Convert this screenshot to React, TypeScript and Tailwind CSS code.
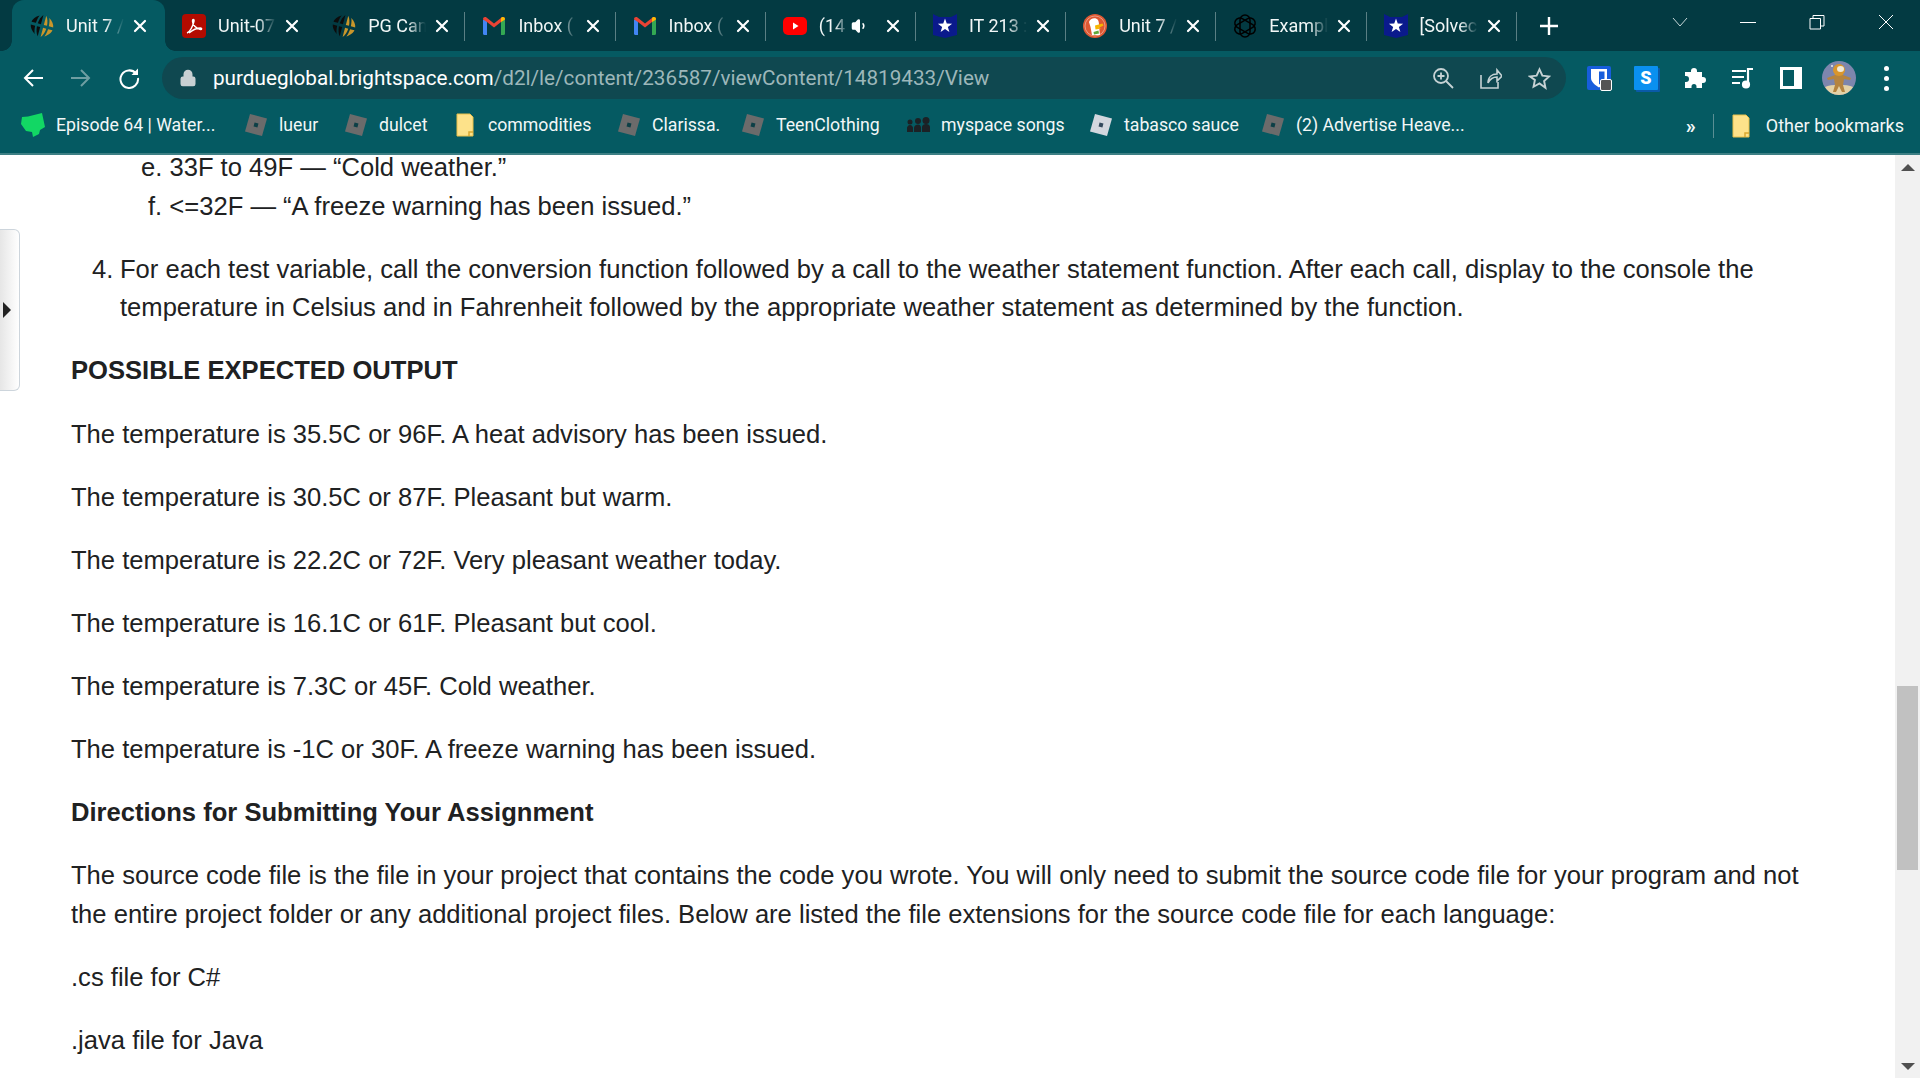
import type { ReactNode } from "react";
import { Lock, Volume1 } from "lucide-react";

function Globe() {
  return (
    <svg viewBox="0 0 24 24" className="w-6 h-6 shrink-0">
      <g transform="rotate(15 12 12)">
        <path d="M7 2.500C3.500 4.500 1 8 .8 10.500h4.500C5.500 7.500 6 4.500 7 2.500z" fill="#0c0c0c" />
        <path d="M10.500 1v9.500H7.200C7.400 7 8.500 3.500 10.500 1z" fill="#0c0c0c" />
        <path d="M13.500 1c2 2.500 3.100 6 3.300 9.500h-3.300z" fill="#c9962b" />
        <path d="M17 2.500c3.500 2 6 5.500 6.200 8h-4.500C18.500 7.500 18 4.500 17 2.500z" fill="#c9962b" />
        <path d="M.8 13.500h4.500c.2 3 .7 6 1.700 8C3.500 19.500 1 16 .8 13.500zM7.200 13.500h3.300V23c-2-2.500-3.100-6-3.300-9.500z" fill="#0c0c0c" />
        <path d="M13.500 13.500h3.300c-.2 3.500-1.300 7-3.300 9.500zM18.700 13.500h4.500c-.2 2.500-2.700 6-6.200 8 1-2 1.500-5 1.700-8z" fill="#c9962b" />
      </g>
    </svg>
  );
}

function Pdf() {
  return (
    <svg viewBox="0 0 24 24" className="w-6 h-6 shrink-0">
      <rect width="24" height="24" rx="4" fill="#b30b00" />
      <path d="M5 19c3-1 6-7 7-12 .3-2-1.500-2-1.500 0 0 4 4 8 8 8.500 1.500 0 1.500-1.500 0-1.500-4 0-8 2-11.500 5" stroke="#fff" strokeWidth="1.500" fill="none" />
    </svg>
  );
}

function Gmail() {
  return (
    <svg viewBox="0 0 24 24" className="w-6 h-6 shrink-0">
      <path d="M1 20V6l3-1 1 3v13H2.500A1.500 1.500 0 0 1 1 20z" fill="#4285f4" />
      <path d="M23 20V6l-3-1-1 3v13h2.500a1.500 1.500 0 0 0 1.500-1.500z" fill="#34a853" />
      <path d="M5 8 1 5.500C1 3 3 2.500 4.500 3.500L12 9.500l7.500-6C21 2.500 23 3 23 5.500L19 8l-7 5.500z" fill="#ea4335" />
      <path d="M19 8l4-2.500C23 3 21 2.500 19.500 3.500L19 4z" fill="#fbbc04" />
    </svg>
  );
}

function Youtube() {
  return (
    <svg viewBox="0 0 24 24" className="w-6 h-6 shrink-0">
      <rect y="3" width="24" height="18" rx="5" fill="#f00" />
      <path d="M10 8.500v7l5.500-3.500z" fill="#fff" />
    </svg>
  );
}

function Shield() {
  return (
    <svg viewBox="0 0 24 24" className="w-6 h-6 shrink-0">
      <path d="M0 0 6 3h12l6-3v21l-12 3-12-3z" fill="#0a1a8c" />
      <path d="M12 4.500 13.760 9.570 19.130 9.680 14.850 12.930 16.410 18.070 12 15 7.590 18.070 9.150 12.930 4.870 9.680 10.240 9.570z" fill="#fff" />
    </svg>
  );
}

function Duck() {
  return (
    <svg viewBox="0 0 24 24" className="w-6 h-6 shrink-0">
      <circle cx="12" cy="12" r="12" fill="#de5833" />
      <circle cx="12" cy="12" r="10" fill="none" stroke="#f3c4b6" strokeWidth=".6" />
      <path d="M6 8c1-4 7-5 9-2 1 2 1 4 1 6l1 9H9L7.500 13z" fill="#fff" />
      <path d="M12 11.500 19.500 9.500l1 2-5 2.500 3 .5-6 1z" fill="#f8b500" />
      <path d="M10.500 18l5-1.500.5 3-5 1z" fill="#5fa83a" />
    </svg>
  );
}

function OpenAi() {
  return (
    <svg viewBox="0 0 24 24" className="w-6 h-6 shrink-0" fill="none" stroke="#000" strokeWidth="1.500">
      <rect x="7" y="1" width="10" height="22" rx="5" />
      <rect x="7" y="1" width="10" height="22" rx="5" transform="rotate(60 12 12)" />
      <rect x="7" y="1" width="10" height="22" rx="5" transform="rotate(120 12 12)" />
    </svg>
  );
}

function Roblox({ light = false }: { light?: boolean }) {
  return (
    <svg viewBox="0 0 24 24" className="w-6 h-6 shrink-0">
      <path d="M6 1 23 5.500 18 23 1 18.500z" fill={light ? "#d3d7de" : "#6b6b6b"} />
      <rect x="10" y="10" width="4" height="4" transform="rotate(15 12 12)" fill={light ? "#33495c" : "#0c3f46"} />
    </svg>
  );
}

function Folder() {
  return (
    <div className="w-6 h-6 shrink-0 flex justify-center">
      <svg viewBox="0 0 18 24" className="w-[18px] h-6">
        <path d="M1 1h13l3 3v19H1z" fill="#fde28a" stroke="#e9c04a" strokeWidth="1" />
        <path d="M13 23v-4h4" fill="none" stroke="#d9a830" strokeWidth="1.500" />
      </svg>
    </div>
  );
}

function People() {
  return (
    <svg viewBox="0 0 24 16" className="w-6 h-4 shrink-0" fill="#1c2125">
      <circle cx="4" cy="5" r="2.500" />
      <circle cx="12" cy="4" r="3" />
      <circle cx="20" cy="3.500" r="3.500" />
      <path d="M1 15v-4c0-1 1-3 3-3s3 2 3 3v4zM8 15v-4c0-2 2-3.500 4-3.500s3 1.500 3 3.500v4zM16 15v-5c0-2 2-3 4-3s4 1 4 3v5z" />
    </svg>
  );
}

function Splat() {
  return (
    <svg viewBox="0 0 24 24" className="w-6 h-6 shrink-0">
      <path d="M1 4 7 3.500 21 0l3 14-5 3-1 4-6 3-1-5-6-1-5-7z" fill="#12d764" />
    </svg>
  );
}

const tabs: { icon: ReactNode; title: string; sound?: boolean; sep?: boolean }[] = [
  { icon: <Globe />, title: "Unit 7 /" },
  { icon: <Pdf />, title: "Unit-07" },
  { icon: <Globe />, title: "PG Can", sep: true },
  { icon: <Gmail />, title: "Inbox (", sep: true },
  { icon: <Gmail />, title: "Inbox (", sep: true },
  { icon: <Youtube />, title: "(14", sound: true, sep: true },
  { icon: <Shield />, title: "IT 213 :", sep: true },
  { icon: <Duck />, title: "Unit 7 /", sep: true },
  { icon: <OpenAi />, title: "Exampl", sep: true },
  { icon: <Shield />, title: "[Solvec", sep: true },
];

const bookmarks: { icon: ReactNode; label: string; w: string }[] = [
  { icon: <Splat />, label: "Episode 64 | Water...", w: "w-[223px]" },
  { icon: <Roblox />, label: "lueur", w: "w-[100px]" },
  { icon: <Roblox />, label: "dulcet", w: "w-[109px]" },
  { icon: <Folder />, label: "commodities", w: "w-[164px]" },
  { icon: <Roblox />, label: "Clarissa.", w: "w-[124px]" },
  { icon: <Roblox />, label: "TeenClothing", w: "w-[165px]" },
  { icon: <People />, label: "myspace songs", w: "w-[183px]" },
  { icon: <Roblox light />, label: "tabasco sauce", w: "w-[172px]" },
  { icon: <Roblox />, label: "(2) Advertise Heave...", w: "w-[240px]" },
];

function CloseIcon() {
  return (
    <svg viewBox="0 0 14 14" className="w-[14px] h-[14px] shrink-0" stroke="#fff" strokeWidth="2.200" strokeLinecap="round">
      <path d="M2 2l10 10M12 2 2 12" />
    </svg>
  );
}

function Tab({ icon, title, sound, sep, active }: { icon: ReactNode; title: string; sound?: boolean; sep?: boolean; active?: boolean }) {
  return (
    <div
      className={
        active
          ? "relative h-[51px] w-[153px] shrink-0 flex items-center pl-[18px] pr-[18px] rounded-t-[12px] bg-[#055a62]"
          : "relative h-[51px] w-[150.200px] shrink-0 flex items-center pl-[17px] pr-[16px]"
      }
    >
      {active && (
        <>
          <span className="absolute -left-[10px] bottom-0 w-[10px] h-[10px] bg-[radial-gradient(circle_at_0_0,transparent_9.500px,#055a62_10px)]" />
          <span className="absolute -right-[10px] bottom-0 w-[10px] h-[10px] bg-[radial-gradient(circle_at_100%_0,transparent_9.500px,#055a62_10px)]" />
        </>
      )}
      {icon}
      <span
        className={
          sound
            ? "ml-[12px] mr-[3px] flex-1 min-w-0 whitespace-nowrap text-[18px] text-[#f2f7f7] [mask-image:linear-gradient(to_right,black_55%,transparent_100%)]"
            : "ml-[12px] mr-[9px] flex-1 min-w-0 overflow-hidden whitespace-nowrap text-[18px] text-[#f2f7f7] [mask-image:linear-gradient(to_right,black_68%,transparent_100%)]"
        }
      >
        {title}
      </span>
      {sound && <Volume1 className="w-[18px] h-[18px] mr-[17px] text-white fill-white" />}
      <CloseIcon />
      {sep && <span className="absolute right-0 top-[12px] h-[29px] w-px bg-[#5a7f84]" />}
    </div>
  );
}

function ToolBtn({ children }: { children: ReactNode }) {
  return <div className="w-[48px] h-[42px] flex items-center justify-center shrink-0">{children}</div>;
}

function Browser() {
  return (
    <div className="shrink-0 font-['Roboto',sans-serif]">
      <div className="h-[51px] bg-[#033a42] flex pl-[12px]">
        <Tab {...tabs[0]} active />
        {tabs.slice(1).map((t, i) => (
          <Tab key={i} {...t} />
        ))}
        <div className="w-[48px] h-[51px] flex items-center justify-center ml-[8px]">
          <svg viewBox="0 0 20 20" className="w-5 h-5" stroke="#fff" strokeWidth="2.400">
            <path d="M10 1v18M1 10h18" />
          </svg>
        </div>
        <div className="flex-1" />
        <div className="flex h-[44px] items-center text-white">
          <div className="w-[68px] flex justify-center">
            <svg viewBox="0 0 16 10" className="w-4 h-[10px]" fill="none" stroke="#c7d6d8" strokeWidth="1">
              <path d="M1 1l7 8 7-8" />
            </svg>
          </div>
          <div className="w-[68px] flex justify-center">
            <div className="w-4 h-px bg-white" />
          </div>
          <div className="w-[69px] flex justify-center">
            <svg viewBox="0 0 16 16" className="w-4 h-4" fill="none" stroke="#fff" strokeWidth="1">
              <path d="M1 4.500h10.500V15H1zM4 4.500V1.500h11V12h-3.500" />
            </svg>
          </div>
          <div className="w-[69px] flex justify-center">
            <svg viewBox="0 0 16 16" className="w-4 h-4" fill="none" stroke="#fff" strokeWidth="1">
              <path d="M1 1l14 14M15 1 1 15" />
            </svg>
          </div>
        </div>
      </div>

      <div className="h-[54px] bg-[#055a62] flex items-start pl-[9px] pt-[6px]">
        <ToolBtn>
          <svg viewBox="0 0 22 22" className="w-[22px] h-[22px]" fill="none" stroke="#fff" strokeWidth="2">
            <path d="M21 11H3M11 3l-8 8 8 8" />
          </svg>
        </ToolBtn>
        <ToolBtn>
          <svg viewBox="0 0 22 22" className="w-[22px] h-[22px]" fill="none" stroke="#6f9ea2" strokeWidth="2">
            <path d="M1 11h18M11 3l8 8-8 8" />
          </svg>
        </ToolBtn>
        <ToolBtn>
          <svg viewBox="0 0 22 22" className="w-[22px] h-[22px]" fill="none" stroke="#fff" strokeWidth="2">
            <path d="M18 6.500A8.800 8.800 0 1 0 20 11" />
            <path d="M20 1.500V8h-6.500" fill="#fff" stroke="none" />
          </svg>
        </ToolBtn>
        <div className="ml-[9px] h-[42px] flex-1 max-w-[1404px] rounded-full bg-[#0f4850] flex items-center">
          <Lock className="ml-[17px] w-[18px] h-[18px] text-[#c8d0d2] fill-[#c8d0d2]" />
          <div className="ml-[16px] pt-[2px] text-[20.700px] whitespace-nowrap flex-1">
            <span className="text-white">purdueglobal.brightspace.com</span>
            <span className="text-[#9db7ba]">/d2l/le/content/236587/viewContent/14819433/View</span>
          </div>
          <ToolBtn>
            <svg viewBox="0 0 22 22" className="w-[22px] h-[22px]" fill="none" stroke="#c6d2d4" strokeWidth="1.800">
              <circle cx="9" cy="9" r="7" />
              <path d="M14 14l7 7M9 5.500v7M5.500 9h7" />
            </svg>
          </ToolBtn>
          <ToolBtn>
            <svg viewBox="0 0 22 22" className="w-[22px] h-[22px]" fill="none" stroke="#c6d2d4" strokeWidth="1.600">
              <path d="M1 8v13h17v-6M8 16c0-6 4-9 9-9V3l5 6-5 5v-4c-4 0-7 2-9 6z" />
            </svg>
          </ToolBtn>
          <div className="w-[48px] mr-[3px] flex justify-center">
            <svg viewBox="0 0 24 24" className="w-[23px] h-[23px]" fill="none" stroke="#c6d2d4" strokeWidth="2">
              <path d="m12 2.500 3 6.500 7 .8-5.200 4.800 1.400 7L12 17.100 5.800 20.600l1.400-7L2 9.800 9 9z" />
            </svg>
          </div>
        </div>
        <div className="ml-[9px] flex">
          <ToolBtn>
            <div className="relative w-6 h-6 rounded-[2px] bg-[#175ddc]">
              <svg viewBox="0 0 24 24" className="w-6 h-6">
                <path d="M4 3h16v9c0 4-4 7-8 9.500C8 19 4 16 4 12z" fill="#fff" />
                <path d="M12 5.500h5.500V12c0 3-3 5-5.500 6.500z" fill="#175ddc" />
              </svg>
              <div className="absolute -right-[1px] -bottom-[1px] w-[12px] h-[12px] bg-[#555] rounded-[2px] border border-white" />
            </div>
          </ToolBtn>
          <ToolBtn>
            <div className="w-6 h-6 -ml-[2px] bg-[#0a90f0] rounded-[1px] shadow-[2px_2px_0_#0a5aa8] flex items-center justify-center text-white font-black text-[18px] leading-none">
              S
            </div>
          </ToolBtn>
          <ToolBtn>
            <svg viewBox="0 0 24 24" className="w-6 h-6 -ml-[2px]" fill="#fff">
              <path d="M9 5a3 3 0 0 1 6 0v1h5v5h1a3 3 0 0 1 0 6h-1v5h-5.500v-1.500a2.500 2.500 0 0 0-5 0V22H3v-6h1a3 3 0 0 0 0-6H3V6h6z" />
            </svg>
          </ToolBtn>
          <ToolBtn>
            <svg viewBox="0 0 24 24" className="w-6 h-6" fill="none" stroke="#fff" strokeWidth="2.200">
              <path d="M1 5h14M1 11h12M1 17h8" />
              <path d="M17 18V3h5" />
              <circle cx="15" cy="18.500" r="3" fill="#fff" />
            </svg>
          </ToolBtn>
          <ToolBtn>
            <div className="w-[22px] h-[22px] border-[3px] border-white border-l-[3px] border-r-[8px] bg-[#055a62]" />
          </ToolBtn>
          <ToolBtn>
            <svg viewBox="0 0 34 34" className="w-[34px] h-[34px]">
              <circle cx="17" cy="17" r="17" fill="#7d86ad" />
              <path d="M3 26c6-3 22-3 28 0-3 5-8 8-14 8S6 31 3 26z" fill="#e4d2a6" />
              <path d="M5 17l8-3h8l8 3-1 2-6-1-1 6 2 7h-3l-3-6-3 6h-3l2-7-1-6-6 1z" fill="#b5843f" />
              <circle cx="17" cy="9" r="6" fill="#d9962c" />
              <ellipse cx="18.500" cy="8" rx="3.500" ry="3" fill="#f0ead8" />
              <circle cx="10" cy="5" r="1" fill="#eeeeee" />
            </svg>
          </ToolBtn>
          <ToolBtn>
            <div className="flex flex-col gap-[5px] -ml-[2px]">
              <span className="w-[5px] h-[5px] rounded-full bg-white" />
              <span className="w-[5px] h-[5px] rounded-full bg-white" />
              <span className="w-[5px] h-[5px] rounded-full bg-white" />
            </div>
          </ToolBtn>
        </div>
      </div>

      <div className="h-[50px] pb-[7px] bg-[#055a62] flex items-center pl-[21px] text-[17.700px] text-[#f2f7f7] border-b-[2px] border-[#3d7f84]">
        {bookmarks.map((b) => (
          <div key={b.label} className={`${b.w} flex items-center gap-[11px] shrink-0 whitespace-nowrap`}>
            {b.icon}
            <span>{b.label}</span>
          </div>
        ))}
        <div className="flex-1" />
        <span className="text-[20px] font-bold mr-[17px]">»</span>
        <div className="w-px h-6 bg-[#5a8f94] mr-[15px]" />
        <div className="flex items-center gap-[13px] pr-[16px]">
          <Folder />
          <span className="text-[18px]">Other bookmarks</span>
        </div>
      </div>
    </div>
  );
}

function Para({ children }: { children: ReactNode }) {
  return <p className="mb-[24.500px]">{children}</p>;
}

export default function App() {
  return (
    <div className="h-[1078px] w-[1920px] overflow-hidden flex flex-col bg-white">
      <Browser />
      <div className="relative flex-1 flex min-h-0">
        <div className="absolute left-0 top-[74px] h-[162px] w-[20px] rounded-r-[6px] border border-l-0 border-[#cdd5dc] bg-gradient-to-r from-[#e6e6e6] to-white flex items-center">
          <span className="ml-[3px] w-0 h-0 border-y-[8px] border-y-transparent border-l-[8px] border-l-[#222]" />
        </div>
        <div className="flex-1 overflow-hidden font-['Liberation_Sans',Arial,sans-serif] text-[25.580px] leading-[38.500px] text-[#202122] pl-[71px] pr-[90px] -mt-[7px]">
          <div className="pl-[70px]">e. 33F to 49F — “Cold weather.”</div>
          <div className="pl-[77px] mb-[24.500px]">f. &lt;=32F — “A freeze warning has been issued.”</div>
          <div className="flex pl-[21px] mb-[24.500px]">
            <span className="w-[28px] shrink-0">4.</span>
            <span>
              For each test variable, call the conversion function followed by a call to the weather statement
              function. After each call, display to the console the temperature in Celsius and in Fahrenheit followed
              by the appropriate weather statement as determined by the function.
            </span>
          </div>
          <p className="mb-[25.500px]">
            <b>POSSIBLE EXPECTED OUTPUT</b>
          </p>
          <Para>The temperature is 35.5C or 96F. A heat advisory has been issued.</Para>
          <Para>The temperature is 30.5C or 87F. Pleasant but warm.</Para>
          <Para>The temperature is 22.2C or 72F. Very pleasant weather today.</Para>
          <Para>The temperature is 16.1C or 61F. Pleasant but cool.</Para>
          <Para>The temperature is 7.3C or 45F. Cold weather.</Para>
          <Para>The temperature is -1C or 30F. A freeze warning has been issued.</Para>
          <Para>
            <b>Directions for Submitting Your Assignment</b>
          </Para>
          <Para>
            The source code file is the file in your project that contains the code you wrote. You will only need to
            submit the source code file for your program and not the entire project folder or any additional project
            files. Below are listed the file extensions for the source code file for each language:
          </Para>
          <Para>.cs file for C#</Para>
          <Para>.java file for Java</Para>
        </div>
        <div className="w-[25px] shrink-0 bg-[#f1f1f1] flex flex-col items-center relative">
          <span className="mt-[9px] w-0 h-0 border-x-[7px] border-x-transparent border-b-[7px] border-b-[#505050]" />
          <div className="absolute top-[531px] left-[2px] w-[21px] h-[184px] bg-[#c1c1c1]" />
          <span className="mt-auto mb-[8px] w-0 h-0 border-x-[7px] border-x-transparent border-t-[7px] border-t-[#505050]" />
        </div>
      </div>
    </div>
  );
}
